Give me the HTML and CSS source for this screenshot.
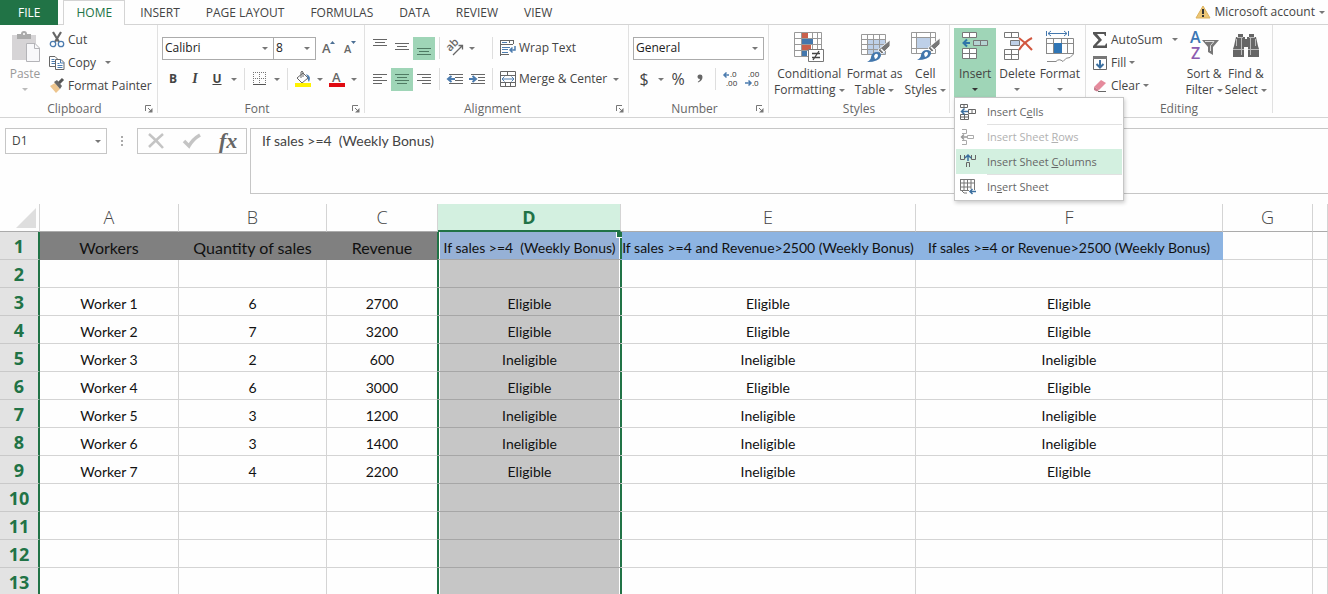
FILE: index.html
```html
<!DOCTYPE html>
<html lang="en">
<head>
  <meta charset="UTF-8">
  <meta name="viewport" content="width=device-width, initial-scale=1.0">
  <title>Weekly Bonus</title>
  <link rel="stylesheet" href="styles.css">
</head>
<body>

  <!-- Tabs -->
  <header class="tabs">
    <nav class="tab-list">
      <a href="#file" class="tab file">FILE</a>
      <a href="#home" class="tab active">HOME</a>
      <a href="#insert" class="tab">INSERT</a>
      <a href="#layout" class="tab">PAGE LAYOUT</a>
      <a href="#formulas" class="tab">FORMULAS</a>
      <a href="#data" class="tab">DATA</a>
      <a href="#review" class="tab">REVIEW</a>
      <a href="#view" class="tab">VIEW</a>
    </nav>
    <button class="account">
      <svg width="16" height="14" viewBox="0 0 16 14"><path d="M8 1L15 13H1Z" fill="#ecc677" stroke="#ddb25c" stroke-linejoin="round"/><path d="M8 4v5M8 10v2" stroke="#333" stroke-width="2"/></svg>
      Microsoft account <span class="caret"></span>
    </button>
  </header>

  <!-- Ribbon -->
  <div class="ribbon">

    <section class="group clipboard">
      <div class="group-body">
        <button class="big disabled">
          <svg width="32" height="32" viewBox="0 0 32 32"><path d="M3 5H27V14H18V30H3Z" fill="#d6d4d6"/><path d="M8 4h4a3 3 0 0 1 6 0h4v5H8Z" fill="#aaa"/><circle cx="15" cy="4" r="1" fill="#fff"/><path d="M17.500 13.500H26L30.500 18V31.500H17.500Z" fill="#f8f8fa" stroke="#b4b4b8"/><path d="M25.500 13.500V18.500H30" fill="none" stroke="#b4b4b8"/></svg>
          <span>Paste</span>
          <span class="caret"></span>
        </button>
        <div class="stack">
          <button class="small">
            <svg width="16" height="16" viewBox="0 0 16 16"><path d="M4 0L10 10M12 0L6 10" stroke="#666" stroke-width="2.200"/><circle cx="4" cy="12" r="2.700" fill="#fff" stroke="#4c7caf" stroke-width="1.300"/><circle cx="12" cy="12" r="2.700" fill="#fff" stroke="#4c7caf" stroke-width="1.300"/></svg>
            Cut
          </button>
          <button class="small">
            <svg width="16" height="16" viewBox="0 0 16 16"><path d="M.5 1.500H6L8.500 4V11.500H.5Z" fill="#fff" stroke="#666"/><path d="M2.500 4.500h3M2.500 6.500h4M2.500 8.500h4" stroke="#4c7caf"/><path d="M6.500 4.500H12L15 7.500V14.500H6.500Z" fill="#fff" stroke="#666"/><path d="M11.500 4.500V8H15M8.500 8.500h2M8.500 10.500h5M8.500 12.500h5" stroke="#4c7caf" fill="none"/></svg>
            Copy <span class="caret spaced"></span>
          </button>
          <button class="small">
            <svg width="16" height="16" viewBox="0 0 16 16"><path d="M1 8L6 5L11 11L7 15Z" fill="#edc58e"/><path d="M5 4L8 2L13 8L11 11Z" fill="#666"/><path d="M10 5L14 1" stroke="#555" stroke-width="3"/></svg>
            Format Painter
          </button>
        </div>
      </div>
      <div class="group-label"><span>Clipboard</span>
        <svg class="launcher" width="8" height="8" viewBox="0 0 8 8"><path d="M.5 6V.5H6M3 3L6 6" fill="none" stroke="#777"/><path d="M7.500 3V7.500H3Z" fill="#777"/></svg>
      </div>
    </section>

    <section class="group font">
      <div class="group-body rows">
        <div class="row">
          <label class="picker family"><select aria-label="Font"><option>Calibri</option></select></label>
          <label class="picker size"><select aria-label="Font size"><option>8</option></select></label>
          <button class="tool grow" aria-label="Increase font size">
            <svg width="16" height="18" viewBox="0 0 16 18"><text x="1" y="14" class="glyph-a">A</text><path d="M9 5L11.500 2L14 5Z" fill="#4c6f94"/></svg>
          </button>
          <button class="tool" aria-label="Decrease font size">
            <svg width="16" height="18" viewBox="0 0 16 18"><text x="1" y="14" class="glyph-a little">A</text><path d="M8 2H13L10.500 5Z" fill="#4c6f94"/></svg>
          </button>
        </div>
        <div class="row">
          <button class="tool"><b>B</b></button>
          <button class="tool italic"><i>I</i></button>
          <button class="tool"><b><u>U</u></b></button>
          <button class="drop" aria-label="Underline style"><span class="caret"></span></button>
          <span class="sep"></span>
          <button class="tool" aria-label="Borders">
            <svg width="14" height="14" viewBox="0 0 14 14"><path d="M.5 0V13M6.500 0V13M12.500 0V13M0 .5H13M0 6.500H13" stroke="#777" stroke-dasharray="1 1"/><path d="M0 12.500H13" stroke="#555"/></svg>
          </button>
          <button class="drop" aria-label="Border style"><span class="caret"></span></button>
          <span class="sep"></span>
          <button class="tool" aria-label="Fill color">
            <svg width="18" height="18" viewBox="0 0 18 18"><path d="M3 8L9 3L14 8L8 13Z" fill="#fff" stroke="#666"/><path d="M7 8V2Q8 .5 9 2V7" fill="none" stroke="#666"/><path d="M12 4Q18 6 15 12Q13 9 14 8Z" fill="#4c7caf"/><rect x="1" y="13" width="16" height="4" fill="#fff200"/></svg>
          </button>
          <button class="drop" aria-label="Fill colors"><span class="caret"></span></button>
          <button class="tool" aria-label="Font color">
            <svg width="18" height="18" viewBox="0 0 18 18"><text x="4" y="12" class="glyph-a">A</text><rect x="1" y="13" width="16" height="4" fill="#e00b12"/></svg>
          </button>
          <button class="drop" aria-label="Font colors"><span class="caret"></span></button>
        </div>
      </div>
      <div class="group-label"><span>Font</span>
        <svg class="launcher" width="8" height="8" viewBox="0 0 8 8"><path d="M.5 6V.5H6M3 3L6 6" fill="none" stroke="#777"/><path d="M7.500 3V7.500H3Z" fill="#777"/></svg>
      </div>
    </section>

    <section class="group alignment">
      <div class="group-body rows">
        <div class="row">
          <button class="tool" aria-label="Top align"><svg width="14" height="20" viewBox="0 0 14 20"><path d="M0 1.500H14M2 4.500H12M0 7.500H14" stroke="#666"/></svg></button>
          <button class="tool" aria-label="Middle align"><svg width="14" height="20" viewBox="0 0 14 20"><path d="M0 5.500H14M2 8.500H12M0 11.500H14" stroke="#666"/></svg></button>
          <button class="tool on" aria-label="Bottom align"><svg width="14" height="20" viewBox="0 0 14 20"><path d="M0 10.500H14M2 13.500H12M0 16.500H14" stroke="#4f7a63"/></svg></button>
          <span class="sep"></span>
          <button class="tool" aria-label="Orientation">
            <svg width="18" height="18" viewBox="0 0 18 18"><text x="0" y="0" class="glyph-ab" transform="translate(4 13) rotate(-45)">ab</text><path d="M7 16L16 7M12.500 6.500H16.500V10.500" fill="none" stroke="#666" stroke-width="1.300"/></svg>
          </button>
          <button class="drop" aria-label="Orientation options"><span class="caret"></span></button>
          <span class="sep push"></span>
          <button class="small wide">
            <svg width="16" height="16" viewBox="0 0 16 16"><path d="M.5 16V.5M0 .5H14M0 4.500H13M.5 14.500H9M13.500 1V4M9.500 1V3" stroke="#666" fill="none"/><path d="M2 2.500H7M2 7.500H10M2 9.500H8M2 12.500H8" stroke="#4c7caf"/><path d="M15 6V10H10M12.500 7.500L10 10L12.500 12.500" fill="none" stroke="#4c7caf" stroke-width="1.500"/></svg>
            Wrap Text
          </button>
        </div>
        <div class="row">
          <button class="tool" aria-label="Align left"><svg width="14" height="14" viewBox="0 0 14 14"><path d="M0 2.500H14M0 5.500H9M0 8.500H14M0 11.500H9" stroke="#666"/></svg></button>
          <button class="tool on" aria-label="Center"><svg width="14" height="14" viewBox="0 0 14 14"><path d="M0 2.500H14M2 5.500H12M0 8.500H14M2 11.500H12" stroke="#4f7a63"/></svg></button>
          <button class="tool" aria-label="Align right"><svg width="14" height="14" viewBox="0 0 14 14"><path d="M0 2.500H14M5 5.500H14M0 8.500H14M5 11.500H14" stroke="#666"/></svg></button>
          <span class="sep"></span>
          <button class="tool" aria-label="Decrease indent"><svg width="16" height="14" viewBox="0 0 16 14"><path d="M2 2.500H16M8 5.500H16M8 8.500H16M2 11.500H16" stroke="#666"/><path d="M8 7H2M4.500 4L1 7L4.500 10" fill="none" stroke="#4c7caf" stroke-width="2"/></svg></button>
          <button class="tool" aria-label="Increase indent"><svg width="16" height="14" viewBox="0 0 16 14"><path d="M2 2.500H16M9 5.500H16M9 8.500H16M2 11.500H16" stroke="#666"/><path d="M0 7H6M3.500 4L7 7L3.500 10" fill="none" stroke="#4c7caf" stroke-width="2"/></svg></button>
          <span class="sep"></span>
          <button class="small wide">
            <svg width="16" height="16" viewBox="0 0 16 16"><path d="M.5 .5H15.500V15.500H.5ZM0 4.500H16M0 11.500H16M7.500 0V4M5.500 12V16M10.500 12V16" fill="none" stroke="#666"/><path d="M2 8H14M4.500 5.500L2 8L4.500 10.500M11.500 5.500L14 8L11.500 10.500" fill="none" stroke="#4c7caf"/></svg>
            Merge &amp; Center <span class="caret near"></span>
          </button>
        </div>
      </div>
      <div class="group-label"><span>Alignment</span>
        <svg class="launcher" width="8" height="8" viewBox="0 0 8 8"><path d="M.5 6V.5H6M3 3L6 6" fill="none" stroke="#777"/><path d="M7.500 3V7.500H3Z" fill="#777"/></svg>
      </div>
    </section>

    <section class="group number">
      <div class="group-body rows">
        <div class="row">
          <label class="picker format"><select aria-label="Number format"><option>General</option></select></label>
        </div>
        <div class="row">
          <button class="tool sign">$</button>
          <button class="drop" aria-label="Currencies"><span class="caret"></span></button>
          <button class="tool sign">%</button>
          <button class="tool" aria-label="Comma style"><svg width="8" height="12" viewBox="0 0 8 12"><path d="M1.500 4a2.500 2.500 0 0 1 5-.2Q6.500 8 2 9.500L1.800 8.800Q4 7.500 4 6Q1.500 6 1.500 4Z" fill="#666"/></svg></button>
          <span class="sep"></span>
          <button class="tool" aria-label="Increase decimal"><svg width="16" height="16" viewBox="0 0 16 16"><text x="7" y="6" class="glyph-dec">.0</text><text x="3" y="15" class="glyph-dec">.00</text><path d="M6 4H1M3.500 1.500L1 4L3.500 6.500" fill="none" stroke="#4c7caf" stroke-width="1.500"/></svg></button>
          <button class="tool" aria-label="Decrease decimal"><svg width="16" height="16" viewBox="0 0 16 16"><text x="3" y="6" class="glyph-dec">.00</text><text x="7" y="15" class="glyph-dec">.0</text><path d="M0 12H6M3.500 9.500L6 12L3.500 14.500" fill="none" stroke="#4c7caf" stroke-width="1.500"/></svg></button>
        </div>
      </div>
      <div class="group-label"><span>Number</span>
        <svg class="launcher" width="8" height="8" viewBox="0 0 8 8"><path d="M.5 6V.5H6M3 3L6 6" fill="none" stroke="#777"/><path d="M7.500 3V7.500H3Z" fill="#777"/></svg>
      </div>
    </section>

    <section class="group styles">
      <div class="group-body">
        <button class="big">
          <svg width="32" height="32" viewBox="0 0 32 32"><path d="M1.500 2.500H28.500V26.500H1.500ZM1 8.500H28M1 14.500H28M1 20.500H28M8.500 2V26M19.500 2V26M24.500 2V26" fill="#fff" stroke="#999"/><rect x="9" y="3" width="6" height="5" fill="#c9604b"/><rect x="9" y="9" width="11" height="5" fill="#4377ad"/><rect x="9" y="15" width="9" height="5" fill="#c9604b"/><rect x="9" y="21" width="5" height="5" fill="#4377ad"/><path d="M15.500 19.500H30.500V31.500H15.500Z" fill="#fff" stroke="#777"/><path d="M19 23.500H27M19 27.500H27M26 21L20 30" stroke="#444" stroke-width="1.300"/></svg>
          <span>Conditional</span>
          <span>Formatting <span class="caret"></span></span>
        </button>
        <button class="big">
          <svg width="32" height="32" viewBox="0 0 32 32"><rect x="9" y="10" width="17" height="14" fill="#bed0e8"/><path d="M2.500 4.500H26.500V24.500H2.500ZM2 9.500H26M2 14.500H26M2 19.500H26M8.500 4V24M14.500 4V24M20.500 4V24" fill="none" stroke="#999"/><path d="M31 10V16L23 24L19 20Z" fill="#777" stroke="#fff" stroke-width=".8"/><path d="M22 19L25 22" stroke="#fff" stroke-width="1.500"/><path d="M18 22Q22 22 22 26Q20 32 8 32Q12 30 12 27Q13 22 18 22Z" fill="#4377ad"/><path d="M15 26Q17 22 19 25Q19 28 16 29Z" fill="#fff"/></svg>
          <span>Format as</span>
          <span>Table <span class="caret"></span></span>
        </button>
        <button class="big">
          <svg width="32" height="32" viewBox="0 0 32 32"><path d="M2.500 2.500H26.500V23.500H2.500ZM2 7.500H26M2 18.500H26M7.500 2V23M21.500 2V23" fill="#fff" stroke="#999"/><rect x="8" y="8" width="13" height="10" fill="#bed0e8"/><path d="M31 8V14L23 22L19 18Z" fill="#777" stroke="#fff" stroke-width=".8"/><path d="M22 17L25 20" stroke="#fff" stroke-width="1.500"/><path d="M18 20Q22 20 22 24Q20 30 8 30Q12 28 12 25Q13 20 18 20Z" fill="#4377ad"/><path d="M15 24Q17 20 19 23Q19 26 16 27Z" fill="#fff"/></svg>
          <span>Cell</span>
          <span>Styles <span class="caret"></span></span>
        </button>
      </div>
      <div class="group-label"><span>Styles</span></div>
    </section>

    <section class="group cells">
      <div class="group-body">
        <button class="big on" aria-haspopup="menu" aria-expanded="true">
          <svg width="32" height="32" viewBox="0 0 32 32"><path d="M3.500 2.500H17.500V7.500H3.500ZM10.500 2V7M3.500 18.500H17.500V28.500H3.500ZM3 23.500H18M10.500 18V29" fill="#fff" stroke="#777"/><path d="M14.500 10.500H28.500V15.500H14.500ZM21.500 10V15" fill="#b5d4d2" stroke="#777"/><path d="M11 13H5M8 9.500L4.500 13L8 16.500" fill="none" stroke="#2f75a8" stroke-width="2"/></svg>
          <span>Insert</span>
          <span class="caret"></span>
        </button>
        <button class="big">
          <svg width="32" height="32" viewBox="0 0 32 32"><path d="M3.500 2.500H17.500V7.500H3.500ZM10.500 2V7M3.500 19.500H17.500V29.500H3.500ZM3 24.500H18M10.500 19V30" fill="#fff" stroke="#777"/><path d="M9.500 10.500H18.500V15.500H9.500Z" fill="#bed0e8" stroke="#777"/><path d="M18 8Q25 13 31 20M31 8Q23 12 18 20" fill="none" stroke="#d2573f" stroke-width="2"/></svg>
          <span>Delete</span>
          <span class="caret"></span>
        </button>
        <button class="big">
          <svg width="32" height="32" viewBox="0 0 32 32"><path d="M2.500 1V6M24.500 1V6M4 3.500H23M7 1L4 3.500L7 6M20 1L23 3.500L20 6" fill="none" stroke="#4377ad"/><path d="M2.500 8.500H29.500V24L26 27.500Q22 27 19 31.500Q15 28 12 31.500H3M2.500 8V24M2 13.500H29M2 23.500H29M9.500 8V24M17.500 8V24M23.500 8V24" fill="none" stroke="#888"/><rect x="10" y="13" width="8" height="10" fill="#2f75b5"/></svg>
          <span>Format</span>
          <span class="caret"></span>
        </button>
      </div>

      <div class="menu" role="menu">
        <button class="menu-item" role="menuitem">
          <svg width="18" height="18" viewBox="0 0 18 18"><path d="M1.500 1.500H8.500V4.500H1.500ZM5 1V5M1.500 11.500H9.500V16.500H1.500ZM1 14H9M5.500 11V17M9.500 6.500H16.500V10.500H9.500ZM13 6V10" fill="#fff" stroke="#666"/><path d="M9 8.500H3M5.500 5.500L2.500 8.500L5.500 11.500" fill="none" stroke="#3b6f9f" stroke-width="1.500"/></svg>
          <span>Insert C<u>e</u>lls</span>
        </button>
        <button class="menu-item ruled" role="menuitem" disabled>
          <svg width="18" height="18" viewBox="0 0 18 18"><path d="M3 1.500H7.500V5.500H3M3 16.500H7.500V12.500H3M8.500 7.500H14.500V10.500H8.500Z" fill="none" stroke="#aaa"/><path d="M8 9H3M5 6.500L2.500 9L5 11.500" fill="none" stroke="#999" stroke-width="1.500"/></svg>
          <span>Insert Sheet <u>R</u>ows</span>
        </button>
        <button class="menu-item hover" role="menuitem">
          <svg width="18" height="18" viewBox="0 0 18 18"><path d="M1.500 2V6.500H5.500V2M12.500 2V6.500H16.500V2M7.500 14V9.500H10.500V14" fill="none" stroke="#666"/><path d="M9 8V2M6 5L9 2L12 5" fill="none" stroke="#3b6f9f" stroke-width="1.500"/></svg>
          <span>Insert Sheet <u>C</u>olumns</span>
        </button>
        <button class="menu-item ruled" role="menuitem">
          <svg width="18" height="18" viewBox="0 0 18 18"><path d="M1.500 1.500H15.500V12M1.500 1V12.500H10M1 5H15M1 9H12M5 1V13M8.500 1V13M12 1V11M3 13L5 15H8" fill="none" stroke="#777"/><path d="M17 13.500H11M13.500 11L11 13.500L13.500 16" fill="none" stroke="#3b6f9f" stroke-width="1.500"/></svg>
          <span>In<u>s</u>ert Sheet</span>
        </button>
      </div>
    </section>

    <section class="group editing">
      <div class="group-body">
        <div class="stack">
          <button class="small">
            <svg width="16" height="16" viewBox="0 0 16 16"><path d="M1 0H14V4H13L12 2H5L10 8L4.500 13.500H13L14 11.500H15V16H1V14L6.500 8L1 2Z" fill="#555"/></svg>
            AutoSum <span class="caret spaced"></span>
          </button>
          <button class="small">
            <svg width="16" height="16" viewBox="0 0 16 16"><path d="M1.500 1.500H14.500V14.500H1.500Z" fill="#fff" stroke="#666"/><path d="M1 1H15V4H1Z" fill="#777"/><path d="M8 5V12M4.500 9L8 12.500L11.500 9" fill="none" stroke="#3b6f9f" stroke-width="2"/></svg>
            Fill <span class="caret"></span>
          </button>
          <button class="small">
            <svg width="16" height="16" viewBox="0 0 16 16"><path d="M2 9L9 2L14 5L7 12Z" fill="#e58a9c"/><path d="M2 9L7 12L5 13.500L2 12Z" fill="#c97c8d"/><path d="M6 13.500H14" stroke="#666"/></svg>
            Clear <span class="caret"></span>
          </button>
        </div>
        <button class="big">
          <svg width="32" height="32" viewBox="0 0 32 32"><text x="2" y="13" class="glyph-az blue">A</text><text x="3" y="29" class="glyph-az purple">Z</text><path d="M14 10H31L25 17V25L20 22V17Z" fill="#777"/><path d="M17 11.500H26L22.500 15.500V21" fill="none" stroke="#ddd"/></svg>
          <span>Sort &amp;</span>
          <span>Filter <span class="caret"></span></span>
        </button>
        <button class="big">
          <svg width="32" height="32" viewBox="0 0 32 32"><path d="M8 4H13V7H15V9H17V7H19V4H24V7H26L28 16L29 19V27H18V17H14V27H3V19L4 16L6 7H8Z" fill="#666"/><path d="M3 19.500H14M18 19.500H29M6.500 9V16M25.500 9V16M11.500 8V25M20.500 8V25M7 7.500H13M19 7.500H25" fill="none" stroke="#bbb"/></svg>
          <span>Find &amp;</span>
          <span>Select <span class="caret"></span></span>
        </button>
      </div>
      <div class="group-label"><span>Editing</span></div>
    </section>
  </div>

  <!-- Formula bar -->
  <div class="formula-bar">
    <label class="picker name-box"><select aria-label="Name box"><option>D1</option></select></label>
    <span class="dots"></span>
    <div class="formula-tools">
      <button aria-label="Cancel"><svg width="18" height="18" viewBox="0 0 18 18"><path d="M2 2Q9 8 16 16M16 2Q8 9 2 15" fill="none" stroke="#c4c4c4" stroke-width="2.500"/></svg></button>
      <button aria-label="Enter"><svg width="20" height="18" viewBox="0 0 20 18"><path d="M2 9L7 14Q11 7 18 3" fill="none" stroke="#c4c4c4" stroke-width="3.500"/></svg></button>
      <button class="fx">fx</button>
    </div>
    <textarea class="formula" aria-label="Formula">If sales &gt;=4  (Weekly Bonus)</textarea>
  </div>

  <!-- Sheet -->
  <main class="sheet-area">
    <table class="sheet">
      <colgroup>
        <col class="col-row"><col class="col-a"><col class="col-b"><col class="col-c"><col class="col-d"><col class="col-e"><col class="col-f"><col class="col-g"><col>
      </colgroup>
      <thead>
        <tr>
          <th class="corner"><svg width="20" height="20" viewBox="0 0 20 20"><path d="M20 0V20H0Z" fill="#dedede"/></svg></th>
          <th>A</th><th>B</th><th>C</th><th class="picked">D</th><th>E</th><th>F</th><th>G</th><th></th>
        </tr>
      </thead>
      <tbody>
        <tr class="titles">
          <th>1</th>
          <td class="gray">Workers</td><td class="gray">Quantity of sales</td><td class="gray">Revenue</td>
          <td class="blue">If sales &gt;=4&nbsp; (Weekly Bonus)</td>
          <td class="blue">If sales &gt;=4 and Revenue&gt;2500 (Weekly Bonus)</td>
          <td class="blue">If sales &gt;=4 or Revenue&gt;2500 (Weekly Bonus)</td>
          <td></td><td></td>
        </tr>
        <tr><th>2</th><td></td><td></td><td></td><td></td><td></td><td></td><td></td><td></td></tr>
        <tr><th>3</th><td>Worker 1</td><td>6</td><td>2700</td><td>Eligible</td><td>Eligible</td><td>Eligible</td><td></td><td></td></tr>
        <tr><th>4</th><td>Worker 2</td><td>7</td><td>3200</td><td>Eligible</td><td>Eligible</td><td>Eligible</td><td></td><td></td></tr>
        <tr><th>5</th><td>Worker 3</td><td>2</td><td>600</td><td>Ineligible</td><td>Ineligible</td><td>Ineligible</td><td></td><td></td></tr>
        <tr><th>6</th><td>Worker 4</td><td>6</td><td>3000</td><td>Eligible</td><td>Eligible</td><td>Eligible</td><td></td><td></td></tr>
        <tr><th>7</th><td>Worker 5</td><td>3</td><td>1200</td><td>Ineligible</td><td>Ineligible</td><td>Ineligible</td><td></td><td></td></tr>
        <tr><th>8</th><td>Worker 6</td><td>3</td><td>1400</td><td>Ineligible</td><td>Ineligible</td><td>Ineligible</td><td></td><td></td></tr>
        <tr><th>9</th><td>Worker 7</td><td>4</td><td>2200</td><td>Eligible</td><td>Ineligible</td><td>Eligible</td><td></td><td></td></tr>
        <tr><th>10</th><td></td><td></td><td></td><td></td><td></td><td></td><td></td><td></td></tr>
        <tr><th>11</th><td></td><td></td><td></td><td></td><td></td><td></td><td></td><td></td></tr>
        <tr><th>12</th><td></td><td></td><td></td><td></td><td></td><td></td><td></td><td></td></tr>
        <tr><th>13</th><td></td><td></td><td></td><td></td><td></td><td></td><td></td><td></td></tr>
      </tbody>
    </table>
  </main>

</body>
</html>
```

FILE: styles.css
```css
* {
  box-sizing: border-box;
}

body {
  margin: 0;
  height: 100vh;
  display: flex;
  flex-direction: column;
  overflow: hidden;
  background-color: #fefefe;
  color: #444;
  font-family: "Open Sans", "Noto Sans", sans-serif;
  font-size: 12px;
  line-height: 16px;
}

button,
select,
textarea {
  font: inherit;
  color: inherit;
  background: none;
  border: none;
  padding: 0;
  margin: 0;
}

svg {
  display: block;
  flex: none;
  overflow: visible;
}

.caret {
  display: inline-block;
  flex: none;
  border: 3px solid transparent;
  border-top-color: #777;
  border-bottom: 0;
  vertical-align: middle;
}

/* Tabs */
.tabs {
  display: flex;
  flex: none;
  justify-content: space-between;
  height: 25px;
  border-bottom: 1px solid #d4d4d4;
}

.tab-list {
  display: flex;
}

.tab {
  padding: 5px 13px;
  height: 25px;
  color: #444;
  text-decoration: none;
  white-space: nowrap;
}

.tab.file {
  background-color: #217346;
  color: #fff;
  padding: 5px 18px;
  margin-right: 5px;
}

.tab.active {
  padding: 4px 12px;
  margin-right: 2px;
  background-color: #fefefe;
  border: 1px solid #d4d4d4;
  border-bottom: none;
  color: #217346;
}

.account {
  display: flex;
  align-items: center;
  gap: 4px;
  padding-right: 3px;
  white-space: nowrap;
}

/* Ribbon */
.ribbon {
  display: flex;
  flex: none;
  height: 93px;
  border-bottom: 1px solid #d4d4d4;
}

.group {
  position: relative;
  display: flex;
  flex: none;
  flex-direction: column;
  padding: 3px 4px 0;
  border-right: 1px solid #e1e1e1;
  margin-bottom: 4px;
}

.group-body {
  display: flex;
  flex: none;
  height: 69px;
}

.group-body.rows {
  flex-direction: column;
  gap: 7px;
  padding-top: 8px;
}

.group-label {
  display: flex;
  align-items: center;
  height: 16px;
  margin-top: 4px;
  color: #666;
}

.group-label span {
  flex: 1;
  text-align: center;
}

.clipboard { width: 158px; }
.font { width: 207px; }
.alignment { width: 264px; }
.number { width: 140px; }
.styles { width: 181px; }
.cells { width: 136px; }
.editing { width: 187px; }

.stack {
  display: flex;
  flex-direction: column;
}

.row {
  display: flex;
  align-items: center;
  height: 24px;
}

.small {
  display: flex;
  align-items: center;
  gap: 3px;
  height: 23px;
  white-space: nowrap;
}

.near {
  margin-left: 3px;
}

.spaced {
  margin-left: 6px;
}

.wide {
  padding-left: 3px;
}

.big {
  display: flex;
  flex-direction: column;
  align-items: center;
  padding: 2px 1px 0;
  white-space: nowrap;
}

.big > svg {
  margin-bottom: 4px;
}

.big > .caret {
  margin-top: 6px;
}

.on {
  background-color: #9fd5b7;
}

.on .caret {
  border-top-color: #333;
}

.disabled {
  color: #999;
}

.disabled .caret {
  border-top-color: #bbb;
}

.clipboard .big {
  width: 42px;
}

.clipboard .stack {
  margin-left: 3px;
}

.cells .big {
  flex: 1;
}

.editing .stack {
  flex: 1;
  padding-left: 2px;
}

.tool {
  display: flex;
  flex: none;
  align-items: center;
  justify-content: center;
  width: 22px;
  height: 23px;
}

.grow {
  margin-left: 2px;
}

.italic {
  font-family: "Liberation Serif", serif;
  font-size: 14px;
  font-weight: bold;
}

.drop {
  display: flex;
  flex: none;
  align-items: center;
  justify-content: center;
  width: 12px;
  height: 23px;
}

.sep {
  flex: none;
  width: 1px;
  height: 22px;
  margin: 0 4px;
  background-color: #dedede;
}

.push {
  margin-left: 14px;
}

.sign {
  font-size: 16px;
}

.picker {
  display: flex;
  flex: none;
  align-items: center;
  height: 23px;
  padding-right: 5px;
  border: 1px solid #ababab;
  background-color: #fff;
  color: #222;
}

.picker select {
  flex: 1;
  min-width: 0;
  padding-left: 2px;
  appearance: none;
}

.picker::after {
  content: "";
  border: 3px solid transparent;
  border-top-color: #777;
  border-bottom: 0;
}

.family { width: 112px; }
.size { width: 42px; border-left: none; }
.format { width: 131px; }

/* Letters drawn in icons */
.glyph-a { font-size: 13px; font-weight: 600; fill: #666; }
.glyph-a.little { font-size: 11px; }
.glyph-ab { font-size: 11px; font-weight: 600; fill: #666; }
.glyph-dec { font-size: 8px; fill: #333; }
.glyph-az { font-size: 16px; font-weight: 600; }
.glyph-az.blue { fill: #3b76b5; }
.glyph-az.purple { fill: #8c5bb0; }

/* Insert menu */
.menu {
  position: absolute;
  top: 72px;
  left: 4px;
  z-index: 2;
  display: flex;
  flex-direction: column;
  width: 170px;
  padding: 1px;
  background-color: #fff;
  border: 1px solid #c6c6c6;
  box-shadow: 1px 2px 4px rgba(0, 0, 0, 0.2);
}

.menu-item {
  display: flex;
  align-items: center;
  gap: 10px;
  height: 25px;
  padding-left: 3px;
  color: #666;
  font-size: 11px;
  text-align: left;
  white-space: nowrap;
}

.menu-item span {
  flex: 1;
  line-height: 24px;
}

.ruled span {
  border-top: 1px solid #e1e1e1;
}

.menu-item:disabled {
  color: #b1b1b1;
}

.hover {
  background-color: #d3f0e0;
}

/* Formula bar */
.formula-bar {
  display: flex;
  flex: none;
  align-items: flex-start;
  padding: 10px 0 10px 5px;
}

.name-box {
  width: 102px;
  height: 26px;
  border-color: #c6c6c6;
  color: #444;
}

.name-box select {
  padding-left: 6px;
}

.dots {
  width: 2px;
  height: 10px;
  margin: 8px 14px;
  border-left: 2px dotted #aaa;
}

.formula-tools {
  display: flex;
  align-items: center;
  justify-content: space-around;
  width: 110px;
  height: 26px;
  margin-right: 3px;
  border: 1px solid #c6c6c6;
}

.fx {
  font-family: "Liberation Serif", serif;
  font-size: 22px;
  font-style: italic;
  font-weight: bold;
  color: #666;
}

.formula {
  flex: 1;
  height: 66px;
  padding: 4px 11px;
  border: 1px solid #c6c6c6;
  border-right: none;
  resize: none;
  font-family: Lato, sans-serif;
  font-size: 14px;
}

/* Sheet */
.sheet-area {
  flex: 1;
  min-height: 0;
  overflow: hidden;
}

.sheet {
  width: 100%;
  table-layout: fixed;
  border-collapse: separate;
  border-spacing: 0;
}

.col-row { width: 40px; }
.col-a { width: 139px; }
.col-b { width: 148px; }
.col-c { width: 111px; }
.col-d { width: 183px; }
.col-e { width: 295px; }
.col-f { width: 307px; }
.col-g { width: 90px; }

.sheet th,
.sheet td {
  height: 28px;
  padding: 0;
  border-right: 1px solid #d4d4d4;
  border-bottom: 1px solid #d4d4d4;
  text-align: center;
  white-space: nowrap;
}

.sheet thead th {
  padding-bottom: 1px;
  border-bottom-color: #ababab;
  font-size: 18px;
  font-weight: 300;
}

.sheet thead .corner {
  padding: 0 3px 3px 0;
  vertical-align: bottom;
}

.corner svg {
  margin-left: auto;
}

.sheet thead .picked {
  padding: 0;
  background-color: #d3f0e0;
  border-bottom: 2px solid #217346;
  color: #217346;
  font-weight: 700;
}

.sheet tbody th {
  background-color: #e3e3e3;
  border-right: 2px solid #217346;
  border-bottom-color: #c9c9c9;
  color: #217346;
  font-size: 18px;
  font-weight: 700;
}

.sheet td {
  padding-top: 4px;
  color: #111;
  font-family: Lato, sans-serif;
  font-size: 14px;
}

.sheet .gray {
  background-color: #808080;
  border-color: #808080;
  font-size: 16px;
}

.sheet .blue {
  background-color: #8db4e2;
  border-color: #8db4e2;
}

/* selected column, its outline runs into the cells on both sides */
.sheet td:nth-child(4) {
  border-right-color: #217346;
}

.sheet td:nth-child(5) {
  position: relative;
  background-color: #c6c6c6;
  border-right: none;
  border-bottom-color: #a6a6a6;
  box-shadow: inset 1px 0 #217346, inset -1px 0 #217346, inset 2px 0 #fff, inset -2px 0 #fff;
}

.sheet td:nth-child(6) {
  box-shadow: inset 1px 0 #217346;
}

.sheet .blue:nth-child(5) {
  background-color: #96b1d6;
}

.sheet .blue:nth-child(5)::after {
  content: "";
  position: absolute;
  top: 0;
  right: -1px;
  width: 5px;
  height: 5px;
  background-color: #217346;
  border: 1px solid #fff;
  border-width: 0 0 1px 1px;
}
```
